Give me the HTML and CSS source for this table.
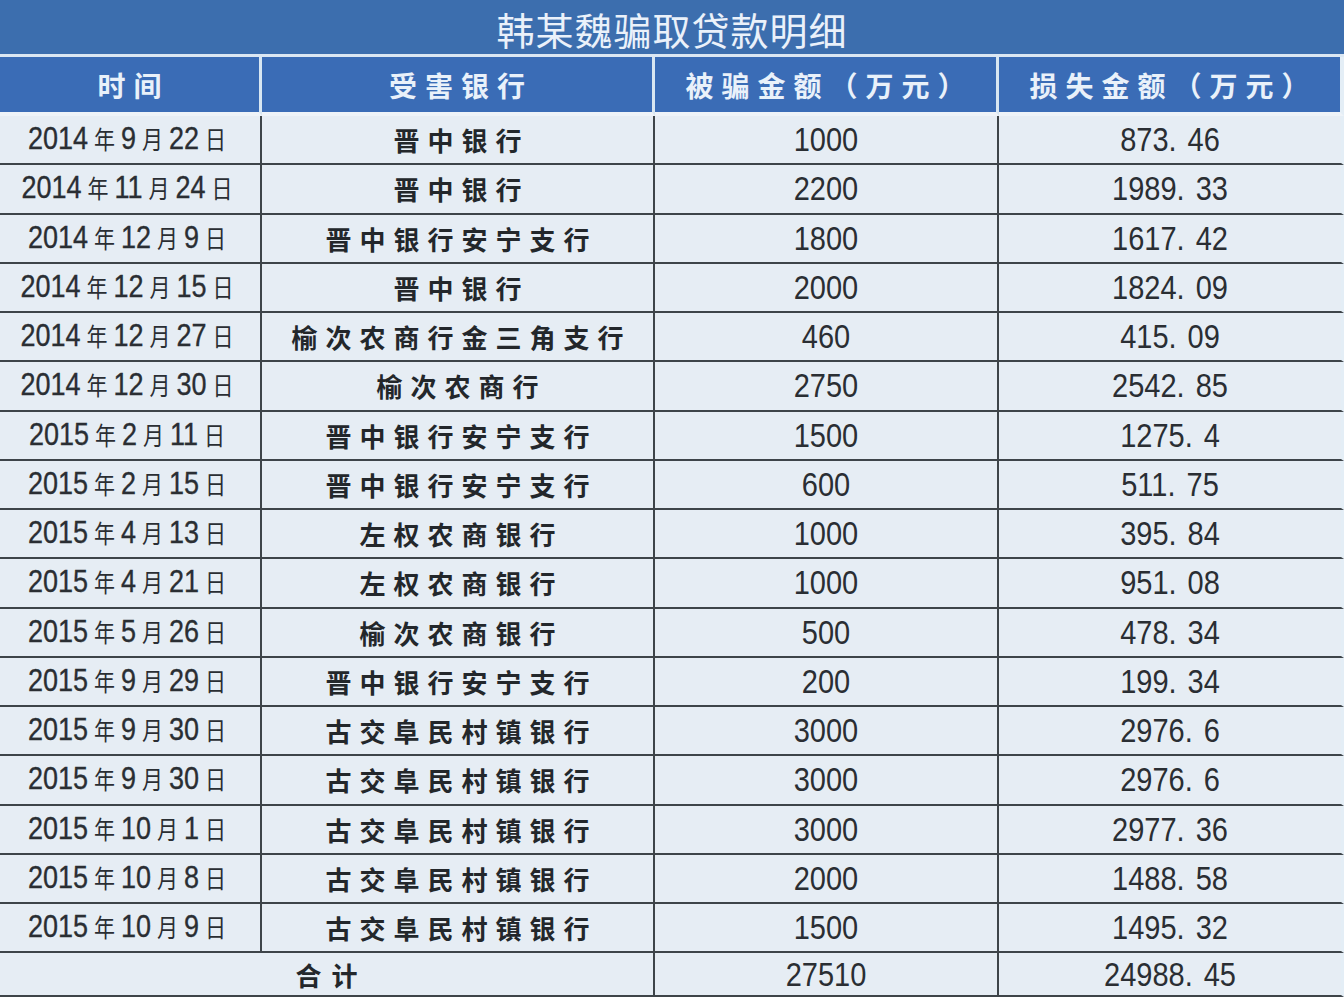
FILE: index.html
```html
<!DOCTYPE html>
<html lang="zh-CN">
<head>
<meta charset="utf-8">
<title>韩某魏骗取贷款明细</title>
<link rel="stylesheet" href="styles.css">
</head>
<body>
<div class="sheet">
  <div class="title">韩某魏骗取贷款明细</div>
  <table class="loans">
    <colgroup>
      <col class="c-date"><col class="c-bank"><col class="c-amt"><col class="c-loss">
    </colgroup>
    <thead>
      <tr>
        <th>时间</th>
        <th>受害银行</th>
        <th>被骗金额（万元）</th>
        <th>损失金额（万元）</th>
      </tr>
    </thead>
    <tbody>
      <tr><td class="date"><span class="t">2014<i>年</i>9<i>月</i>22<i>日</i></span></td><td class="bank">晋中银行</td><td class="num"><span class="t">1000</span></td><td class="num"><span class="t">873<b>.</b>46</span></td></tr>
      <tr><td class="date"><span class="t">2014<i>年</i>11<i>月</i>24<i>日</i></span></td><td class="bank">晋中银行</td><td class="num"><span class="t">2200</span></td><td class="num"><span class="t">1989<b>.</b>33</span></td></tr>
      <tr><td class="date"><span class="t">2014<i>年</i>12<i>月</i>9<i>日</i></span></td><td class="bank">晋中银行安宁支行</td><td class="num"><span class="t">1800</span></td><td class="num"><span class="t">1617<b>.</b>42</span></td></tr>
      <tr><td class="date"><span class="t">2014<i>年</i>12<i>月</i>15<i>日</i></span></td><td class="bank">晋中银行</td><td class="num"><span class="t">2000</span></td><td class="num"><span class="t">1824<b>.</b>09</span></td></tr>
      <tr><td class="date"><span class="t">2014<i>年</i>12<i>月</i>27<i>日</i></span></td><td class="bank">榆次农商行金三角支行</td><td class="num"><span class="t">460</span></td><td class="num"><span class="t">415<b>.</b>09</span></td></tr>
      <tr><td class="date"><span class="t">2014<i>年</i>12<i>月</i>30<i>日</i></span></td><td class="bank">榆次农商行</td><td class="num"><span class="t">2750</span></td><td class="num"><span class="t">2542<b>.</b>85</span></td></tr>
      <tr><td class="date"><span class="t">2015<i>年</i>2<i>月</i>11<i>日</i></span></td><td class="bank">晋中银行安宁支行</td><td class="num"><span class="t">1500</span></td><td class="num"><span class="t">1275<b>.</b>4</span></td></tr>
      <tr><td class="date"><span class="t">2015<i>年</i>2<i>月</i>15<i>日</i></span></td><td class="bank">晋中银行安宁支行</td><td class="num"><span class="t">600</span></td><td class="num"><span class="t">511<b>.</b>75</span></td></tr>
      <tr><td class="date"><span class="t">2015<i>年</i>4<i>月</i>13<i>日</i></span></td><td class="bank">左权农商银行</td><td class="num"><span class="t">1000</span></td><td class="num"><span class="t">395<b>.</b>84</span></td></tr>
      <tr><td class="date"><span class="t">2015<i>年</i>4<i>月</i>21<i>日</i></span></td><td class="bank">左权农商银行</td><td class="num"><span class="t">1000</span></td><td class="num"><span class="t">951<b>.</b>08</span></td></tr>
      <tr><td class="date"><span class="t">2015<i>年</i>5<i>月</i>26<i>日</i></span></td><td class="bank">榆次农商银行</td><td class="num"><span class="t">500</span></td><td class="num"><span class="t">478<b>.</b>34</span></td></tr>
      <tr><td class="date"><span class="t">2015<i>年</i>9<i>月</i>29<i>日</i></span></td><td class="bank">晋中银行安宁支行</td><td class="num"><span class="t">200</span></td><td class="num"><span class="t">199<b>.</b>34</span></td></tr>
      <tr><td class="date"><span class="t">2015<i>年</i>9<i>月</i>30<i>日</i></span></td><td class="bank">古交阜民村镇银行</td><td class="num"><span class="t">3000</span></td><td class="num"><span class="t">2976<b>.</b>6</span></td></tr>
      <tr><td class="date"><span class="t">2015<i>年</i>9<i>月</i>30<i>日</i></span></td><td class="bank">古交阜民村镇银行</td><td class="num"><span class="t">3000</span></td><td class="num"><span class="t">2976<b>.</b>6</span></td></tr>
      <tr><td class="date"><span class="t">2015<i>年</i>10<i>月</i>1<i>日</i></span></td><td class="bank">古交阜民村镇银行</td><td class="num"><span class="t">3000</span></td><td class="num"><span class="t">2977<b>.</b>36</span></td></tr>
      <tr><td class="date"><span class="t">2015<i>年</i>10<i>月</i>8<i>日</i></span></td><td class="bank">古交阜民村镇银行</td><td class="num"><span class="t">2000</span></td><td class="num"><span class="t">1488<b>.</b>58</span></td></tr>
      <tr><td class="date"><span class="t">2015<i>年</i>10<i>月</i>9<i>日</i></span></td><td class="bank">古交阜民村镇银行</td><td class="num"><span class="t">1500</span></td><td class="num"><span class="t">1495<b>.</b>32</span></td></tr>
    </tbody>
    <tfoot>
      <tr><td class="bank total" colspan="2">合计</td><td class="num"><span class="t">27510</span></td><td class="num"><span class="t">24988<b>.</b>45</span></td></tr>
    </tfoot>
  </table>
</div>
</body>
</html>
```
FILE: styles.css
```css
html, body {
  margin: 0;
  padding: 0;
  background: #ffffff;
}

.sheet {
  width: 1344px;
  font-family: "Liberation Sans", "Noto Sans CJK SC", sans-serif;
  color: #262a2e;
}

.title {
  height: 54px;
  line-height: 57px;
  background: #3c6eae;
  border-bottom: 3px solid #dbe7f3;
  color: #eaf1fa;
  font-family: "Noto Sans CJK SC", sans-serif;
  font-size: 38px;
  text-align: center;
  letter-spacing: 1px;
}

.loans {
  width: 1344px;
  border-collapse: separate;
  border-spacing: 0;
  table-layout: fixed;
}

.c-date { width: 262px; }
.c-bank { width: 393px; }
.c-amt  { width: 344px; }
.c-loss { width: 345px; }

.loans th {
  height: 55px;
  padding: 0;
  background: #3a6cb6;
  color: #e9f1fa;
  font-family: "Noto Sans CJK SC", sans-serif;
  font-weight: 700;
  font-size: 28px;
  letter-spacing: 8px;
  text-indent: 8px;
  border-right: 3px solid #d8e7f2;
  border-bottom: 4px solid #eef3f8;
}

.loans th:last-child {
  border-right: 4px solid #e4eef6;
}

.loans td {
  height: 47.25px;
  padding: 0;
  background: #e6edf4;
  text-align: center;
  border-right: 2px solid #3e4449;
  border-bottom: 2px solid #3e4449;
  white-space: nowrap;
}

.loans td:last-child {
  border-right: 3px solid #e4eef6;
}

.t {
  display: inline-block;
  transform: scaleY(1.17);
}

.date {
  font-size: 27px;
  color: #2a2e33;
  -webkit-text-stroke: 0.3px #2a2e33;
}

.date i {
  font-style: normal;
  font-family: "Noto Sans CJK SC", sans-serif;
  font-size: 21px;
  margin: 0 6px;
  -webkit-text-stroke: 0;
}

.bank {
  font-family: "Noto Sans CJK SC", sans-serif;
  font-weight: 700;
  font-size: 26px;
  letter-spacing: 8px;
  text-indent: 8px;
  color: #23272b;
}

.num {
  font-size: 29px;
  color: #2a2e33;
}

.num b {
  font-weight: 400;
  padding-right: 11px;
}

.loans tfoot td {
  height: 42px;
}

.total {
  letter-spacing: 10px;
  text-indent: 10px;
}
```
